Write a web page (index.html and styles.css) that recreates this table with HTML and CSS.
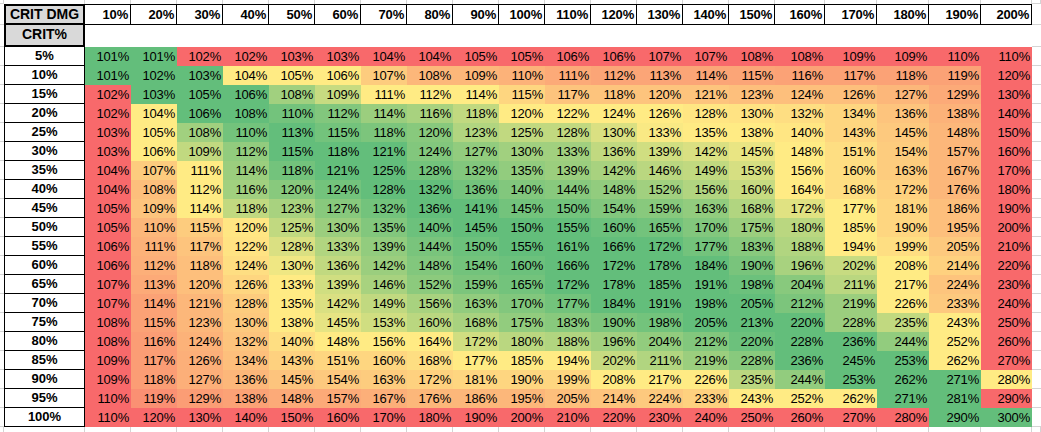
FILE: index.html
```html
<!DOCTYPE html>
<html lang="en">
<head>
<meta charset="utf-8">
<title>Crit table</title>
<link rel="stylesheet" href="styles.css">
</head>
<body>
<div class="sheet" id="sheet"></div>
<script src="script.js"></script>
</body>
</html>
```

FILE: styles.css
```css
html, body {
  margin: 0;
  padding: 0;
  background: #fff;
}
body {
  font-family: "Liberation Sans", Arial, sans-serif;
  font-size: 13px;
  color: #000;
}
.sheet {
  display: grid;
  grid-template-columns: 4px 81px repeat(15, 46px) 50px 52px 52px 52px 51px 9px;
  grid-template-rows: 4px 21px 22px repeat(20, 19px) 5px;
  width: 1041px;
  height: 432px;
  overflow: hidden;
}
.sheet > div {
  box-sizing: border-box;
  display: flex;
  align-items: flex-end;
  line-height: 1;
  white-space: nowrap;
  overflow: hidden;
}
.fr-top, .fr-bot {
  border-right: 1px solid #d4d4d4;
}
.fr-corner {
  border-right: 1px solid #d4d4d4;
  border-bottom: 1px solid #d4d4d4;
}
.fr-side {
  border-bottom: 1px solid #d4d4d4;
}
.hdr {
  border-top: 1px solid #000;
  border-bottom: 1px solid #000;
  border-right: 1px solid #000;
  font-weight: bold;
  justify-content: flex-end;
  padding: 0 2px 3px 0;
  letter-spacing: -0.2px;
}
.key {
  background: #d9d9d9;
  border: 2px solid #000;
  font-weight: bold;
  font-size: 14px;
  justify-content: center;
  padding-bottom: 2px;
}
.key-crit {
  border-top: 0;
  padding-bottom: 4px;
}
.lbl {
  border: 1px solid #000;
  border-top: 0;
  font-weight: bold;
  justify-content: center;
  padding-bottom: 3px;
}
.val {
  justify-content: flex-end;
  padding: 0 2px 3px 0;
  letter-spacing: -0.2px;
}
.blank {
  background: #fff;
}
```

FILE: script.js
```js
(function () {
  var L = [
    [1,1,0,0,0,0,0,0,0,0,0,0,0,0,0,0,0,0,0,0],
    [1,1,1,.5,.5,.5,.38,.3,.3,.28,.25,.23,.23,.23,.23,.22,.22,.22,.22,0],
    [0,1,1,1,.8,.68,.5,.5,.5,.42,.35,.35,.35,.35,.33,.33,.33,.3,.25,0],
    [0,.5,1,1,.95,.9,.82,.78,.7,.5,.5,.5,.5,.48,.47,.45,.42,.35,.28,0],
    [0,.5,.8,.95,1,.95,.92,.88,.75,.7,.7,.62,.52,.5,.5,.48,.42,.37,.3,0],
    [0,.5,.7,.85,1,1,1,.9,.85,.8,.8,.7,.65,.62,.57,.5,.45,.38,.3,0],
    [0,.38,.5,.82,.95,1,1,.95,.9,.85,.82,.78,.72,.7,.63,.5,.45,.38,.3,0],
    [0,.33,.5,.8,.88,.95,1,1,.95,.9,.88,.85,.8,.75,.68,.5,.45,.4,.3,0],
    [0,.35,.5,.7,.78,.88,.95,1,1,.95,.95,.9,.88,.85,.75,.6,.5,.42,.33,0],
    [0,.3,.38,.48,.7,.82,.9,.97,1,1,1,.97,.95,.9,.82,.72,.5,.42,.33,0],
    [0,.28,.35,.47,.62,.75,.85,.93,.97,1,1,1,1,.95,.88,.75,.5,.45,.37,0],
    [0,.27,.33,.45,.55,.7,.82,.9,.95,.97,1,1,1,1,.93,.78,.68,.5,.4,0],
    [0,.25,.33,.42,.5,.65,.78,.87,.92,.95,1,1,1,1,.97,.88,.72,.5,.35,0],
    [0,.22,.3,.38,.5,.62,.7,.78,.85,.9,.95,1,1,1,1,.92,.82,.5,.37,0],
    [0,.22,.3,.37,.5,.58,.65,.72,.78,.85,.88,.92,.95,1,1,1,.82,.7,.5,0],
    [0,.2,.28,.35,.45,.5,.5,.5,.65,.72,.75,.8,.85,.9,.97,1,1,.85,.5,0],
    [0,.2,.27,.33,.4,.42,.42,.45,.5,.5,.5,.68,.75,.82,.88,1,1,1,.5,0],
    [0,.2,.27,.3,.35,.37,.38,.4,.42,.42,.42,.5,.5,.5,.72,.85,1,1,1,.5],
    [0,.15,.2,.22,.25,.25,.27,.3,.3,.3,.33,.35,.37,.4,.5,.5,.5,1,1,0],
    [0,0,0,0,0,0,0,0,0,0,0,0,0,0,0,0,0,0,1,1]
  ];
  var RED = [248, 105, 107], YEL = [255, 235, 132], GRN = [99, 190, 123];
  function colour(l) {
    var a, b, t;
    if (l <= 0.5) { a = RED; b = YEL; t = l / 0.5; }
    else { a = YEL; b = GRN; t = (l - 0.5) / 0.5; }
    var c = [];
    for (var i = 0; i < 3; i++) c.push(Math.round(a[i] + (b[i] - a[i]) * t));
    return 'rgb(' + c.join(',') + ')';
  }
  var sheet = document.getElementById('sheet');
  function cell(cls, txt, bg) {
    var d = document.createElement('div');
    d.className = cls;
    if (txt) d.textContent = txt;
    if (bg) d.style.backgroundColor = bg;
    sheet.appendChild(d);
  }
  var j, i;
  // top fringe
  cell('fr-corner');
  cell('fr-top');
  for (j = 0; j < 20; j++) cell('fr-top');
  cell('fr-corner');
  // header row
  cell('fr-side');
  cell('key key-dmg', 'CRIT DMG');
  for (j = 0; j < 20; j++) cell('hdr', ((j + 1) * 10) + '%');
  cell('fr-side');
  // crit label row
  cell('fr-side');
  cell('key key-crit', 'CRIT%');
  for (j = 0; j < 20; j++) cell('blank');
  cell('fr-side');
  // data rows
  for (i = 0; i < 20; i++) {
    var c = (i + 1) * 5;
    cell('fr-side');
    cell('lbl', c + '%');
    for (j = 0; j < 20; j++) {
      var d = (j + 1) * 10;
      var v = Math.round((10000 + c * d) / 100);
      cell('val', v + '%', colour(L[i][j]));
    }
    cell('fr-side');
  }
  // bottom fringe
  cell('fr-bot');
  cell('fr-bot');
  for (j = 0; j < 20; j++) cell('fr-bot');
  cell('fr-bot');
})();
```
